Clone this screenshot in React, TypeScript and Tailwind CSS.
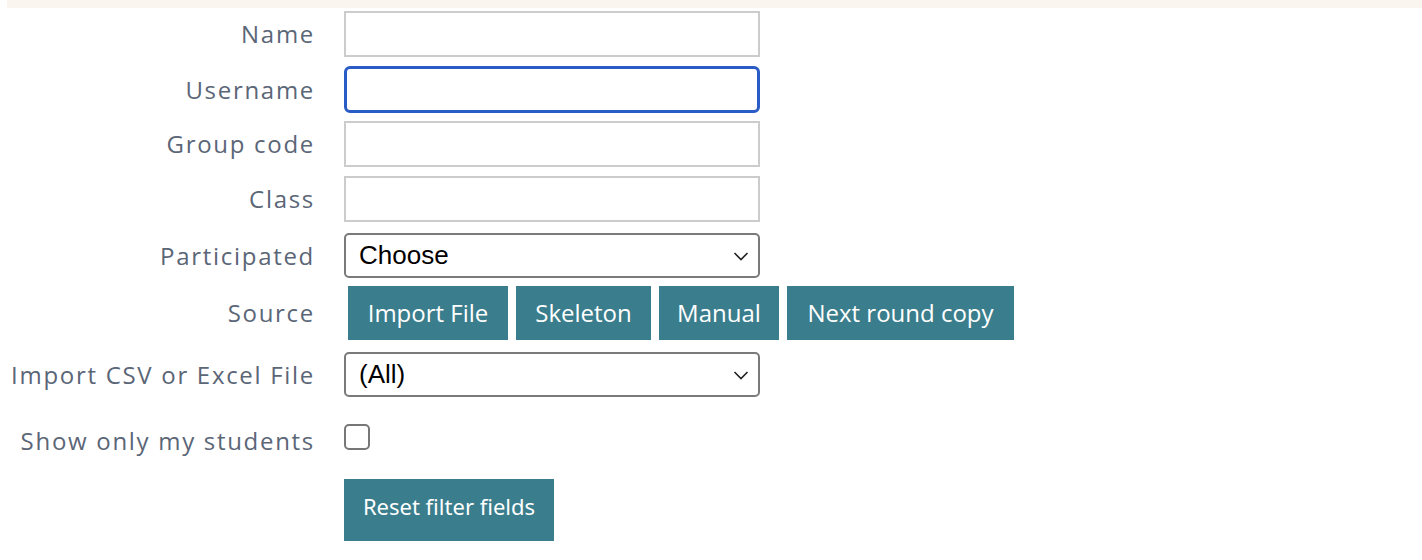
import React from 'react';

const label =
  'w-[315px] shrink-0 text-right text-[24px] tracking-[1.7px] text-[#5b6677] font-["Open_Sans",sans-serif]';
const field = 'ml-[29px] w-[416px] h-[46px] border-2 border-[#cccccc] bg-white outline-none';
const select =
  'ml-[29px] w-[416px] h-[45px] flex items-center justify-between rounded-[5px] border-2 border-[#7a7a7a] bg-white pl-[13px] pr-[8px] text-[26px] text-black font-["Liberation_Sans",Arial,sans-serif]';
const srcBtn =
  'h-[54px] bg-[#3a7d8c] text-white text-[24px] font-["Open_Sans",sans-serif] flex items-center justify-center';

function Chevron() {
  return (
    <svg width="18" height="18" viewBox="0 0 18 18" fill="none" stroke="#222" strokeWidth="1.6">
      <path d="M2.5 6 L9 12.5 L15.5 6" />
    </svg>
  );
}

function Row({ name, className, children }: { name: string; className?: string; children: React.ReactNode }) {
  return (
    <div className={'flex items-center ' + (className ?? '')}>
      <div className={label}>{name}</div>
      {children}
    </div>
  );
}

export default function App() {
  return (
    <div className="w-[1422px] h-[560px] bg-white overflow-hidden">
      <div className="ml-[7px] h-[8px] bg-[#faf5ee]" />

      <Row name="Name" className="mt-[3px]">
        <input className={field} />
      </Row>
      <Row name="Username" className="mt-[9px]">
        <input className="ml-[29px] w-[416px] h-[47px] rounded-[6px] border-[3px] border-[#2a5cc5] bg-white outline-none" />
      </Row>
      <Row name="Group code" className="mt-[8px]">
        <input className={field} />
      </Row>
      <Row name="Class" className="mt-[9px]">
        <input className={field} />
      </Row>
      <Row name="Participated" className="mt-[11px]">
        <div className={select}>
          <span>Choose</span>
          <Chevron />
        </div>
      </Row>
      <Row name="Source" className="mt-[8px]">
        <div className="ml-[33px] flex gap-[8px]">
          <button className={srcBtn + ' w-[160px]'}>Import File</button>
          <button className={srcBtn + ' w-[135px]'}>Skeleton</button>
          <button className={srcBtn + ' w-[120px]'}>Manual</button>
          <button className={srcBtn + ' w-[227px]'}>Next round copy</button>
        </div>
      </Row>
      <Row name="Import CSV or Excel File" className="mt-[12px]">
        <div className={select}>
          <span>(All)</span>
          <Chevron />
        </div>
      </Row>
      <div className="mt-[27px] flex items-start">
        <div className={label + ' -mt-[1px]'}>Show only my students</div>
        <div className="ml-[29px] w-[26px] h-[26px] rounded-[5px] border-2 border-[#777] bg-white" />
      </div>
      <div className="mt-[20px] ml-[344px]">
        <button className='w-[210px] h-[62px] pb-[8px] bg-[#3a7d8c] text-white text-[22px] font-["Noto_Sans",sans-serif]'>
          Reset filter fields
        </button>
      </div>
    </div>
  );
}
